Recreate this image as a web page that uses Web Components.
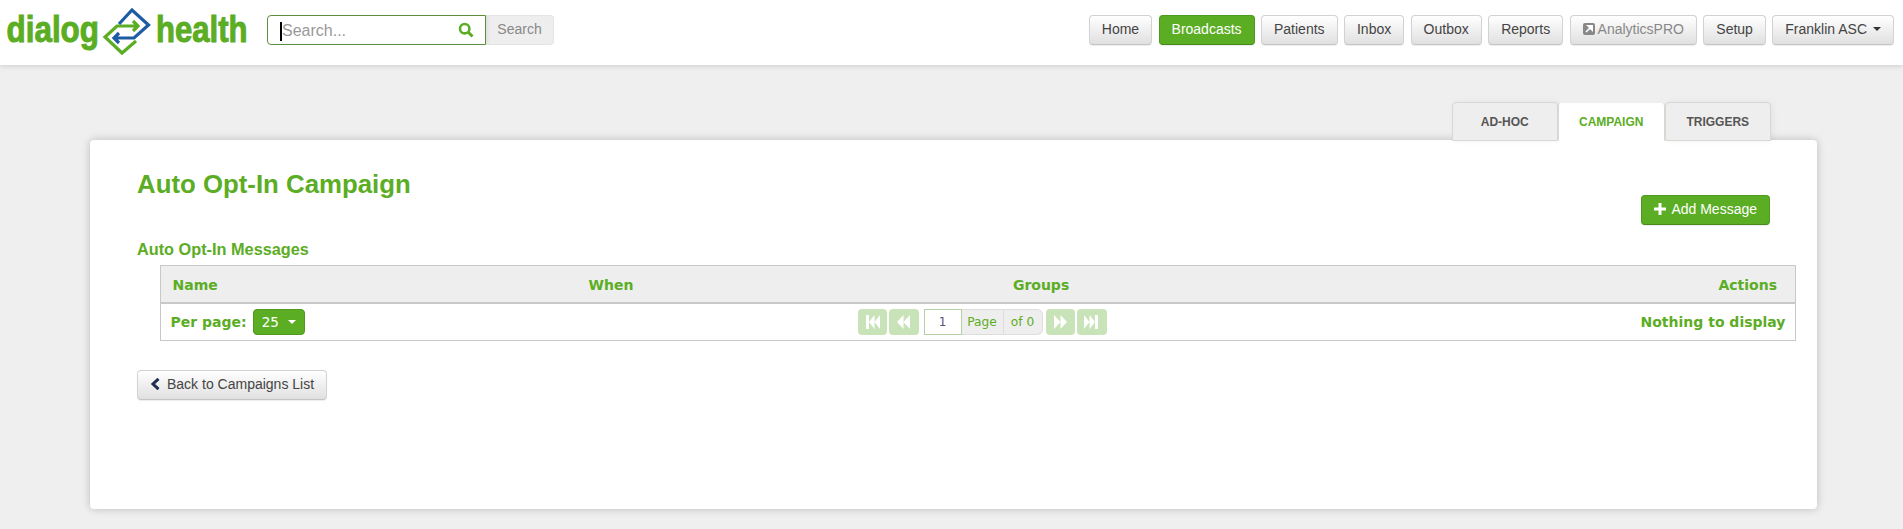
<!DOCTYPE html>
<html lang="en"><head><meta charset="utf-8"><title>Auto Opt-In Campaign</title>
<style>
html,body{margin:0;padding:0;height:100%;overflow:hidden}
body{background:#efefef;font:14px "Liberation Sans",Arial,sans-serif;color:#333}
</style></head><body>
<dh-app></dh-app>
<script>
const G='#5bad24';
function def(name,css,html,init){
  customElements.define(name,class extends HTMLElement{
    constructor(){super();const s=this.attachShadow({mode:'open'});
      s.innerHTML='<style>'+css+'</style>'+(typeof html==='function'?html(this):html);}
    connectedCallback(){if(init)init(this)}
  });
}
def('dh-btn',`
:host{display:inline-flex;box-sizing:border-box;height:30px;align-items:center;justify-content:center;gap:4px;padding:0 12px 2px;border:1px solid #d2d2d2;border-bottom-color:#c4c4c4;border-radius:4px;background:linear-gradient(#fff,#e0e0e0);color:#444;font:14px/20px "Liberation Sans",Arial,sans-serif;white-space:nowrap;box-shadow:0 1px 1px rgba(0,0,0,.075)}
:host([primary]){background:${G};border-color:#4f9a1e;border-bottom-color:#47891b;color:#fff}
:host([muted]){color:#888}
`,`<slot></slot>`);
def('dh-logo',`:host{display:block;width:267px;height:65px;flex:none}svg{display:block}
text{font:bold 37px "Liberation Sans",Arial,sans-serif;fill:#5bad24;stroke:#5bad24;stroke-width:1}`,
`<svg width="267" height="65" viewBox="0 0 267 65" role="img" aria-label="dialog health">
<text x="6.500" y="42" textLength="92.500" lengthAdjust="spacingAndGlyphs">dialog</text>
<text x="156" y="42" textLength="91.500" lengthAdjust="spacingAndGlyphs">health</text>
<g fill="none" stroke-width="3.200" stroke-linejoin="miter">
<path d="M136 41 122 53 105 37 117 26H138M133 21l5 5-5 5" stroke="#5bad24"/>
<path d="M119 24 132 10 148.500 25 134 38H114M119 33l-5 5 5 5" stroke="#1d5ca3"/>
</g></svg>`);
def('dh-search',`:host{display:flex;height:30px}
.box{position:relative;box-sizing:border-box;width:219px;height:30px;border:1px solid #5b8f3d;border-radius:4px 0 0 4px;background:#fff;display:flex;align-items:center;padding:2px 11px 0 14px;justify-content:space-between;font:16px "Liberation Sans",Arial,sans-serif;color:#999}
.caret{position:absolute;left:12px;top:6px;width:2px;height:19px;background:#000}
svg{display:block;margin-top:-2px}
.go{box-sizing:border-box;width:68px;height:30px;border:1px solid #e4e4e4;border-left:0;border-radius:0 4px 4px 0;background:#eee;color:#888;display:flex;align-items:center;justify-content:center;font:14px "Liberation Sans",Arial,sans-serif;box-shadow:inset 4px 0 4px -3px rgba(0,0,0,.1);padding-bottom:2px}`,
`<div class="box"><span>Search...</span><i class="caret"></i><svg width="16" height="16" viewBox="0 0 16 16"><circle cx="6.700" cy="6.700" r="4.700" fill="none" stroke="#5bad24" stroke-width="2.600"/><path d="M10.300 10.300 14.500 14.500" stroke="#5bad24" stroke-width="3"/></svg></div><div class="go">Search</div>`);
def('dh-nav',`:host{display:flex;box-sizing:border-box;height:65px;background:#fff;align-items:flex-start;box-shadow:0 1px 5px rgba(0,0,0,.14);position:relative}
.l{display:flex;flex:1;align-items:flex-start}.l dh-search{margin-top:15px}
.r{display:flex;gap:6.400px;padding:15px 9px 0 0}
svg{display:block}`,
`<div class="l"><dh-logo></dh-logo><dh-search></dh-search></div>
<div class="r">
<dh-btn>Home</dh-btn><dh-btn primary>Broadcasts</dh-btn><dh-btn>Patients</dh-btn><dh-btn>Inbox</dh-btn><dh-btn>Outbox</dh-btn><dh-btn>Reports</dh-btn>
<dh-btn muted style="gap:3px"><svg width="12" height="12" viewBox="0 0 12 12"><rect width="12" height="12" rx="2" fill="#888"/><path d="M3 9 7 5M5 2.800h4.200V7z" stroke="#fff" stroke-width="1.600" fill="#fff"/></svg>AnalyticsPRO</dh-btn>
<dh-btn>Setup</dh-btn>
<dh-btn style="gap:6px">Franklin ASC<svg width="8" height="4" viewBox="0 0 8 4"><path d="M0 0h8L4 4z" fill="#333"/></svg></dh-btn>
</div>`);
def('dh-tabs',`:host{display:flex;justify-content:flex-end;padding-right:132px;height:38px;position:relative;z-index:1}
a{box-sizing:border-box;width:106.500px;height:39px;display:flex;align-items:center;justify-content:center;font:bold 12px "Liberation Sans",Arial,sans-serif;color:#555;background:#eee;border:1px solid #d8d8d2;border-radius:4px 4px 0 0;box-shadow:2px 0 6px rgba(0,0,0,.05)}
a:first-child{width:105.500px}
a.on{background:#fff;color:${G};border-color:#eee #d8d8d2 #fff;box-shadow:none;position:relative}`,
`<a>AD-HOC</a><a class="on">CAMPAIGN</a><a>TRIGGERS</a>`);
const V='font-family:"DejaVu Sans",Verdana,sans-serif;';
const ic={
 first:'<path d="M1 0h3v14H1zM4 7 9.500 0v14zM9.500 7 15 0v14z"/>',
 prev:'<path d="M1 7l6.500-7v14zM7.500 7 14 0v14z"/>',
 next:'<path d="M1 0l6.500 7L1 14zM7.500 0 14 7l-6.500 7z"/>',
 last:'<path d="M0 0l5.500 7L0 14zM5.500 0 11 7l-5.500 7zM11 0h3v14h-3z"/>'};
const pb=k=>`<span class="pb"><svg width="15" height="14" viewBox="0 0 15 14" fill="#fff">${ic[k]}</svg></span>`;
def('dh-pager',`:host{display:flex;height:26px;align-items:stretch;${V}font-size:12.200px;color:${G}}
.pb{box-sizing:border-box;width:29.500px;background:#c9e3b8;border-radius:4px;display:flex;align-items:center;justify-content:center;margin-right:2px}
.in{box-sizing:border-box;width:38px;border:1px solid #b5cfa6;background:#fff;color:#557;display:flex;align-items:center;justify-content:center;margin-left:3px;font-size:12px}
.ad{box-sizing:border-box;background:#eee;border:1px solid #ddd;border-left:0;display:flex;align-items:center;justify-content:center}
.p{width:42px}.o{width:39px;border-left:0;border-radius:0 6px 6px 0;margin-right:3px}`,
`${pb('first')}${pb('prev')}<span class="in">1</span><span class="ad p">Page</span><span class="ad o">of 0</span>${pb('next')}${pb('last')}`);
def('dh-table',`:host{display:block;box-sizing:border-box;margin-left:23px;border:1px solid #c8c8c8;${V}font-weight:bold;font-size:14px;color:${G}}
.h{display:grid;grid-template-columns:416px 424.400px 1fr auto;align-items:center;background:#eee;border-bottom:2px solid #c8c8c8;padding:2px 18px 0 11.500px;box-sizing:border-box;height:38px}
.b{display:grid;grid-template-columns:687px auto 1fr;height:36px;align-items:center;padding:0 9.500px}
.pp{display:flex;align-items:center;gap:6px}
.dd{box-sizing:border-box;width:52px;height:26px;background:${G};border:1px solid #4f9a1e;border-radius:4px;color:#fff;font-weight:normal;font-size:13.500px;display:flex;align-items:center;gap:9px;padding-left:8px}
.e{text-align:right}`,
`<div class="h"><span>Name</span><span>When</span><span>Groups</span><span>Actions</span></div>
<div class="b"><div class="pp">Per page: <span class="dd">25<svg width="8" height="4" viewBox="0 0 8 4"><path d="M0 0h8L4 4z" fill="#fff"/></svg></span></div><dh-pager style="font-weight:normal"></dh-pager><div class="e">Nothing to display</div></div>`);
def('dh-card',`:host{display:block;box-sizing:border-box;margin:0 86px 0 90px;height:369px;background:#fff;border-radius:4px;box-shadow:0 0 8px rgba(0,0,0,.22);padding:30px 21px 0 47px;font:14px "Liberation Sans",Arial,sans-serif}
.t{display:flex;justify-content:space-between;align-items:flex-start;height:55px}
h1{margin:0;font:bold 25.800px/28px "Liberation Sans",Arial,sans-serif;color:${G}}
.t dh-btn{margin:25px 26px 0 0}
h2{margin:14px 0 6px;font:bold 16.300px/20px "Liberation Sans",Arial,sans-serif;color:${G}}
.back{margin-top:29px;display:flex}svg{display:block}`,
`<div class="t"><h1>Auto Opt-In Campaign</h1><dh-btn primary style="gap:5px"><svg width="12" height="12" viewBox="0 0 12 12"><path d="M4.500 0h3v4.500H12v3H7.500V12h-3V7.500H0v-3h4.500z" fill="#fff"/></svg>Add Message</dh-btn></div>
<h2>Auto Opt-In Messages</h2>
<dh-table></dh-table>
<div class="back"><dh-btn style="gap:7px"><svg width="10" height="12" viewBox="0 0 10 12"><path d="M8.500 .800 3 6l5.500 5.200" fill="none" stroke="#1f2f4f" stroke-width="3"/></svg>Back to Campaigns List</dh-btn></div>`);
def('dh-app',`:host{display:block}main{display:block;padding-top:37px}`,
`<dh-nav></dh-nav><main><dh-tabs></dh-tabs><dh-card></dh-card></main>`);
</script>
</body></html>
